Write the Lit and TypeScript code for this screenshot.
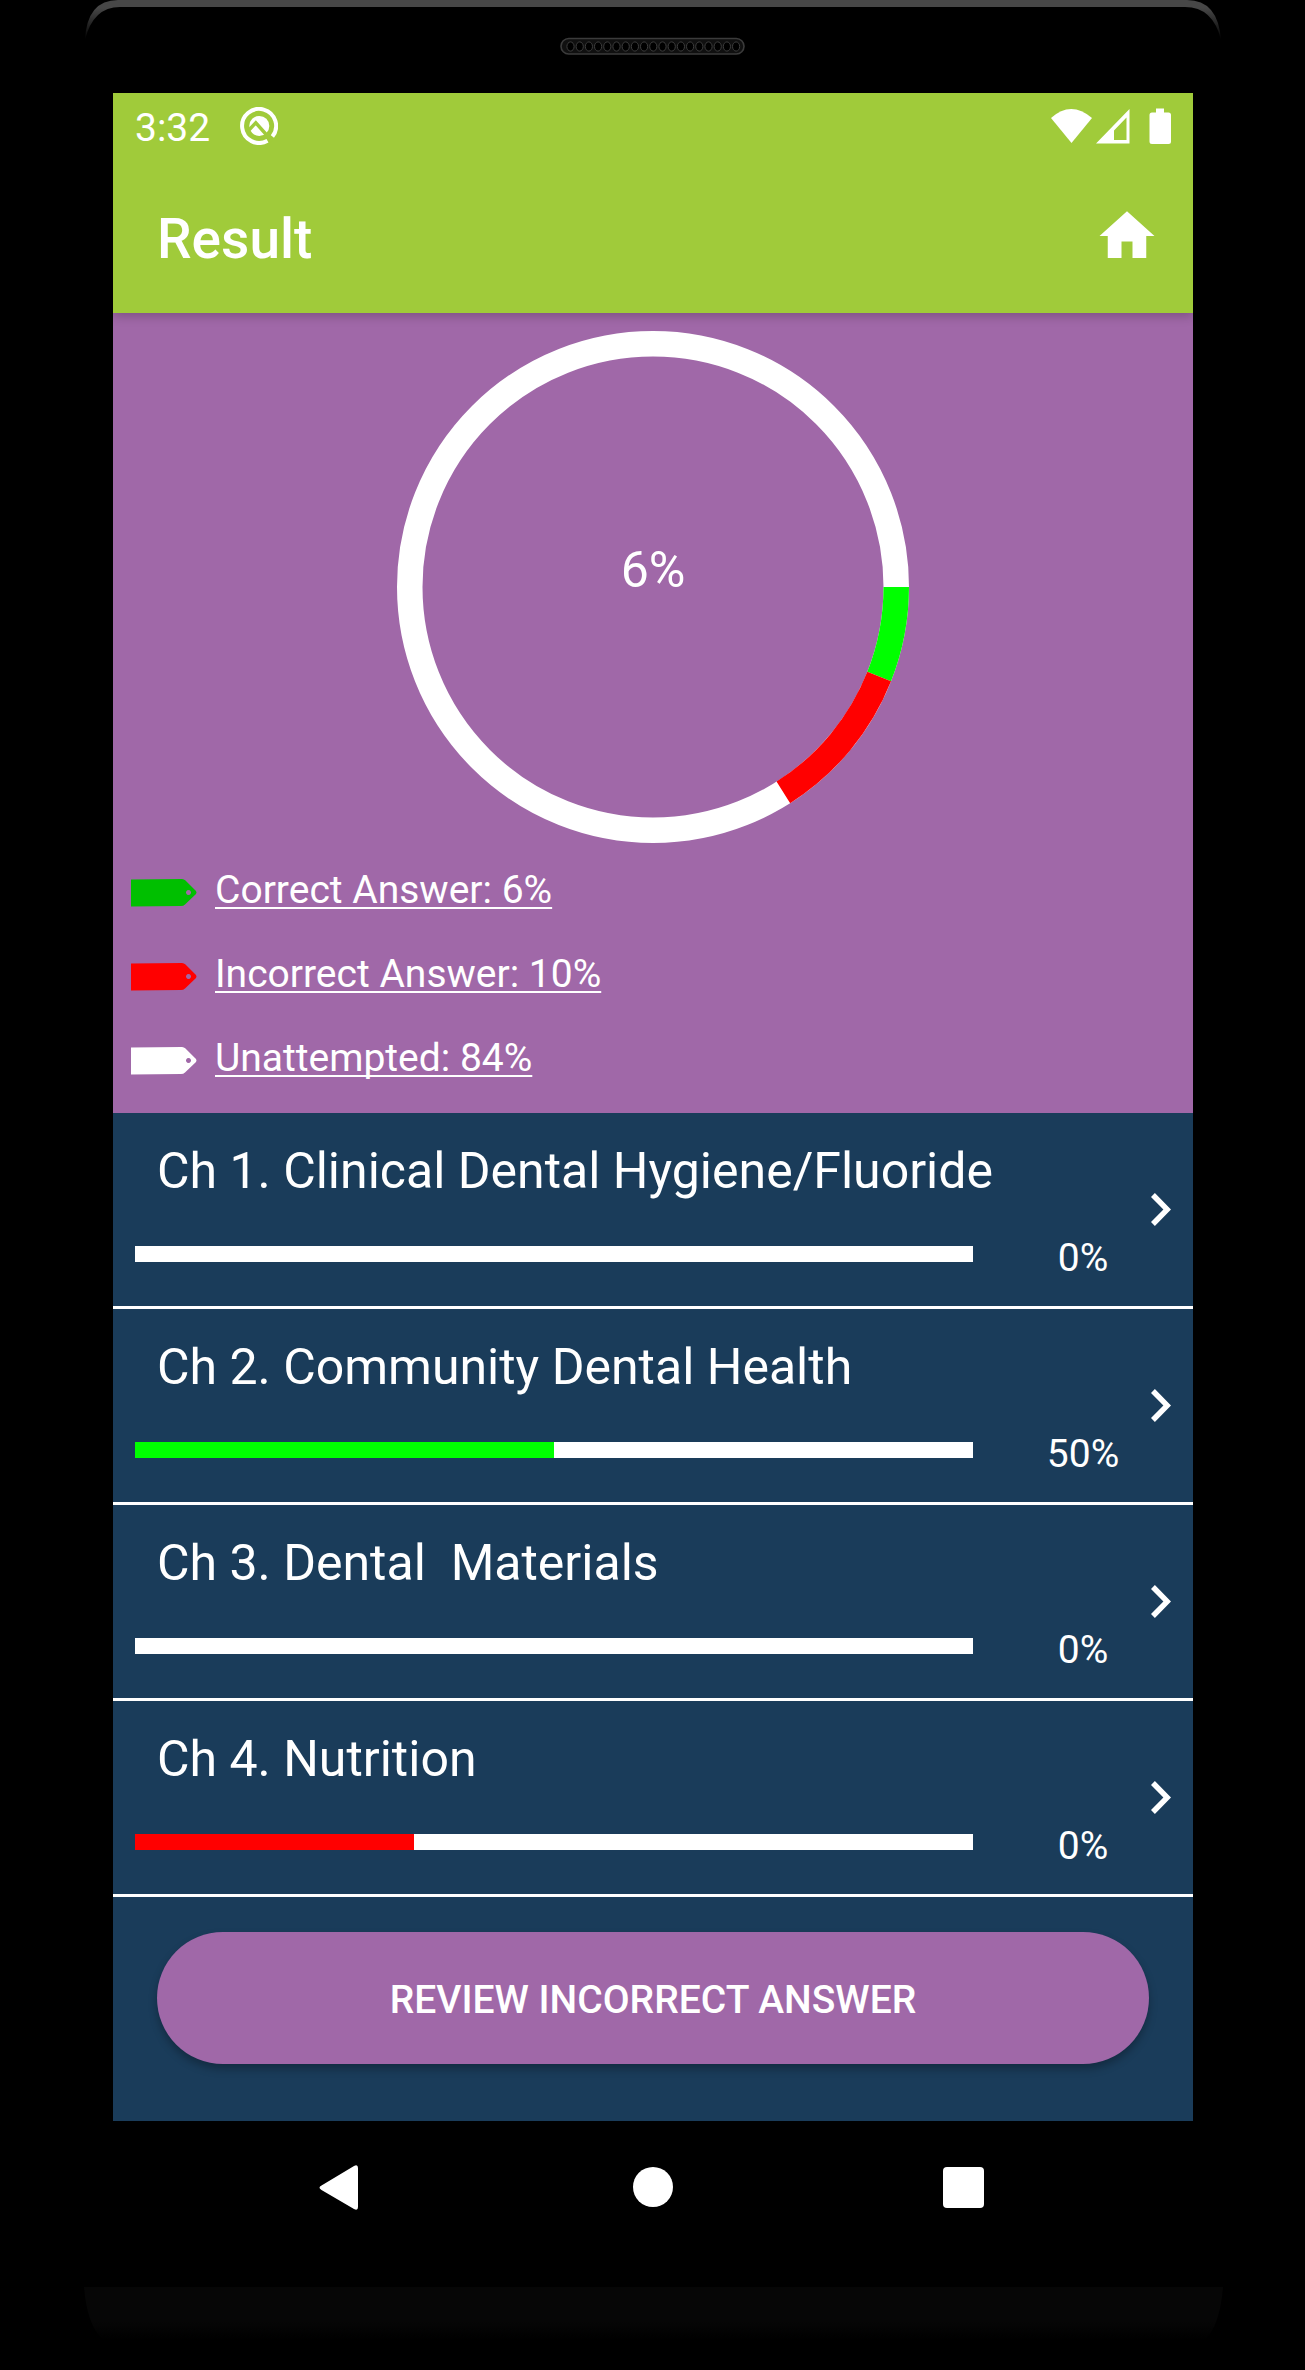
import { LitElement, html, css, svg } from "lit";
import { customElement } from "lit/decorators.js";

interface Chapter {
  title: string;
  percent: string;
  fill: number;
  tone: string;
}

const chapters: Chapter[] = [
  { title: "Ch 1. Clinical Dental Hygiene/Fluoride", percent: "0%", fill: 0, tone: "good" },
  { title: "Ch 2. Community Dental Health", percent: "50%", fill: 50, tone: "good" },
  { title: "Ch 3. Dental\u00a0 Materials", percent: "0%", fill: 0, tone: "good" },
  { title: "Ch 4. Nutrition", percent: "0%", fill: 33.3, tone: "bad" },
];

const legend = [
  { text: "Correct Answer: 6%", color: "#00bf00" },
  { text: "Incorrect Answer: 10%", color: "#ff0000" },
  { text: "Unattempted: 84%", color: "#ffffff" },
];

// Stroked arc on the ring, angles measured clockwise from three o'clock.
const arc = (from: number, to: number, color: string) => {
  const r = 243.25;
  const p = (deg: number) => {
    const a = (deg * Math.PI) / 180;
    return `${256 + r * Math.cos(a)} ${256 + r * Math.sin(a)}`;
  };
  return svg`<path d="M${p(from)} A${r} ${r} 0 0 1 ${p(to)}" fill="none" stroke=${color} stroke-width="25.5"/>`;
};

@customElement("app-root")
export class AppRoot extends LitElement {
  static styles = css`
    :host { display: block; }
    * { box-sizing: border-box; }
    svg { display: block; flex: none; }
    .device {
      position: relative;
      width: 1305px;
      height: 2370px;
      background: #000;
      color: #fff;
      font-family: Roboto, "Liberation Sans", sans-serif;
      display: flex;
      flex-direction: column;
      align-items: center;
    }
    .shell { position: absolute; left: 0; top: 0; }
    .screen { width: 1080px; margin: 93px 0 0 1px; position: relative; }
    .appbar {
      height: 220px;
      background: #a0cb3a;
      box-shadow: 0 3px 10px rgba(0, 0, 0, 0.22);
      position: relative;
      clip-path: inset(0 0 -20px 0);
    }
    .status { height: 66px; display: flex; align-items: center; padding: 0 22px; }
    .time { font-size: 39px; line-height: 66px; width: 74px; padding-top: 3px; }
    .status .badge { margin-left: 31px; }
    .status .right { margin-left: auto; }
    .titlebar { height: 154px; display: flex; align-items: center; justify-content: space-between; padding: 0 33px 0 44px; }
    .title { font-size: 55px; font-weight: 500; line-height: 64px; margin-top: 5px; }
    .summary { height: 800px; background: #a068a8; padding: 18px 18px 0; }
    .chart { height: 512px; display: grid; place-items: center; }
    .chart > * { grid-area: 1 / 1; }
    .score { font-size: 50px; line-height: 58px; padding-bottom: 34px; }
    .legend { display: flex; flex-direction: column; padding-top: 8px; }
    .entry { height: 84px; display: flex; align-items: center; gap: 18px; }
    .label {
      font-size: 39px;
      line-height: 46px;
      padding-bottom: 2px;
      text-decoration: underline;
      text-decoration-thickness: 2px;
      text-underline-offset: 4px;
      text-decoration-skip-ink: none;
      margin-top: -4px;
    }
    .list { background: #1a3c5a; height: 1008px; }
    .row { height: 196px; border-bottom: 3px solid #fff; padding: 0 22px; display: flex; align-items: center; }
    .body { flex: 1; height: 193px; display: flex; flex-direction: column; }
    .name { font-size: 50px; line-height: 58px; padding: 29px 0 0 22px; white-space: pre; height: 112px; }
    .progress { display: flex; align-items: flex-start; }
    .track { width: 838px; height: 16px; background: #fff; margin-top: 21px; }
    .fill { height: 16px; }
    .good { background: #00ff00; }
    .bad { background: #ff0000; }
    .percent { width: 220px; text-align: center; font-size: 39px; line-height: 46px; margin-top: 10px; margin-right: -42px; }
    .action { padding: 35px 44px 0; }
    .button {
      display: block;
      width: 992px;
      height: 132px;
      border: 0;
      border-radius: 66px;
      background: #a068a8;
      color: #fff;
      font: 500 39px Roboto, "Liberation Sans", sans-serif;
      padding: 3px 0 0;
      box-shadow: 0 5px 9px rgba(0, 0, 0, 0.28);
    }
    .nav { display: flex; width: 1080px; height: 132px; align-items: center; margin-left: 1px; }
  `;

  render() {
    return html`
      <div class="device">
        <svg class="shell" width="1305" height="2370" viewBox="0 0 1305 2370">
          <defs>
            <linearGradient id="rim" x1="0" y1="0" x2="0" y2="1">
              <stop offset="0" stop-color="#474747" />
              <stop offset="0.2" stop-color="#474747" />
              <stop offset="1" stop-color="#000" />
            </linearGradient>
            <linearGradient id="chin" x1="0" y1="0" x2="0" y2="1">
              <stop offset="0" stop-color="#060606" />
              <stop offset="0.65" stop-color="#060606" />
              <stop offset="1" stop-color="#000" />
            </linearGradient>
          </defs>
          <path d="M85 40 Q87 0 118 0 H1187 Q1218 0 1221 40 Q1213 7 1185 7 H120 Q93 7 85 40Z" fill="url(#rim)" />
          <rect x="561" y="38.5" width="183" height="15.5" rx="7.75" fill="#101010" stroke="#3b3b3b" stroke-width="1.6" />
          ${Array.from({ length: 19 }, (_, i) => svg`<ellipse cx=${570.5 + i * 9.2} cy="46.5" rx="3.6" ry="4.600" fill="#000" stroke="#3d3d3d" stroke-width="1"/>`)}
          <path d="M84 2287 H1223 Q1220 2325 1205 2340 H103 Q87 2325 84 2287Z" fill="url(#chin)" />
        </svg>
        <main class="screen">
          <header class="appbar">
            <div class="status">
              <span class="time">3:32</span>
              <svg class="badge" width="38" height="38" viewBox="0 0 38 38">
                <path d="M32.400 29.500 A17 17 0 1 0 27.500 33.700" fill="none" stroke="#fff" stroke-width="4" />
                <circle cx="19.300" cy="18.900" r="10" fill="#fff" />
                <path d="M9 23 L15.800 15.800 L32 34" fill="none" stroke="#a0cb3a" stroke-width="3.400" />
              </svg>
              <svg class="right" width="120" height="38" viewBox="0 0 120 38">
                <path d="M0 11 Q20 -7 41 11 L20.500 36Z" fill="#fff" />
                <path d="M45 36.500 L78.500 2 V36.500Z M63 33 H75.500 V10.500 L63 23.500Z" fill="#fff" fill-rule="evenodd" />
                <path d="M105 1.500 H113 V5.500 H117.500 Q120 5.500 120 8 V34.500 Q120 37 117.500 37 H101 Q98.500 37 98.500 34.500 V8 Q98.500 5.500 101 5.500 H105Z" fill="#fff" />
              </svg>
            </div>
            <div class="titlebar">
              <span class="title">Result</span>
              <svg width="66" height="66" viewBox="0 0 24 24"><path d="M10 20v-6h4v6h5v-8h3L12 3 2 12h3v8z" fill="#fff" /></svg>
            </div>
          </header>
          <section class="summary">
            <div class="chart">
              <svg width="512" height="512" viewBox="0 0 512 512">
                <circle cx="256" cy="256" r="243.25" fill="none" stroke="#fff" stroke-width="25.5" />
                ${arc(0, 21.6, "#00ff00")}${arc(21.6, 57.6, "#ff0000")}
              </svg>
              <span class="score">6%</span>
            </div>
            <div class="legend">
              ${legend.map(
                (l) => html`<div class="entry">
                  <svg width="66" height="30" viewBox="0 0 66 30">
                    <path d="M0 1.500 L51 1 Q53 1 54.500 2.500 L65 13 Q66 14.500 65 16 L54 26.500 Q52.500 28 50 28 L0 28.500Z M57.500 12 a2.500 2.500 0 1 0 .01 0Z" fill=${l.color} fill-rule="evenodd" />
                  </svg>
                  <span class="label">${l.text}</span>
                </div>`,
              )}
            </div>
          </section>
          <section class="list">
            ${chapters.map(
              (c) => html`<div class="row">
                <div class="body">
                  <div class="name">${c.title}</div>
                  <div class="progress">
                    <div class="track"><div class="fill ${c.tone}" style="width:${c.fill}%"></div></div>
                    <span class="percent">${c.percent}</span>
                  </div>
                </div>
                <svg width="20" height="33" viewBox="0 0 20 33">
                  <path d="M0 3.900 L3.900 0 L20 16.500 L3.900 33 L0 29.100 L12.400 16.500Z" fill="#fff" />
                </svg>
              </div>`,
            )}
            <div class="action"><button class="button">REVIEW INCORRECT ANSWER</button></div>
          </section>
        </main>
        <nav class="nav">
          <svg width="1080" height="132" viewBox="0 0 1080 132">
            <path d="M208.500 64.500 L241 45 Q245 43 245 47 V86 Q245 90 241 88 L208.500 69 Q204.500 66.500 208.500 64.500Z" fill="#fff" />
            <circle cx="540" cy="66" r="20" fill="#fff" />
            <rect x="830" y="46" width="41" height="41" rx="4" fill="#fff" />
          </svg>
        </nav>
      </div>
    `;
  }
}
